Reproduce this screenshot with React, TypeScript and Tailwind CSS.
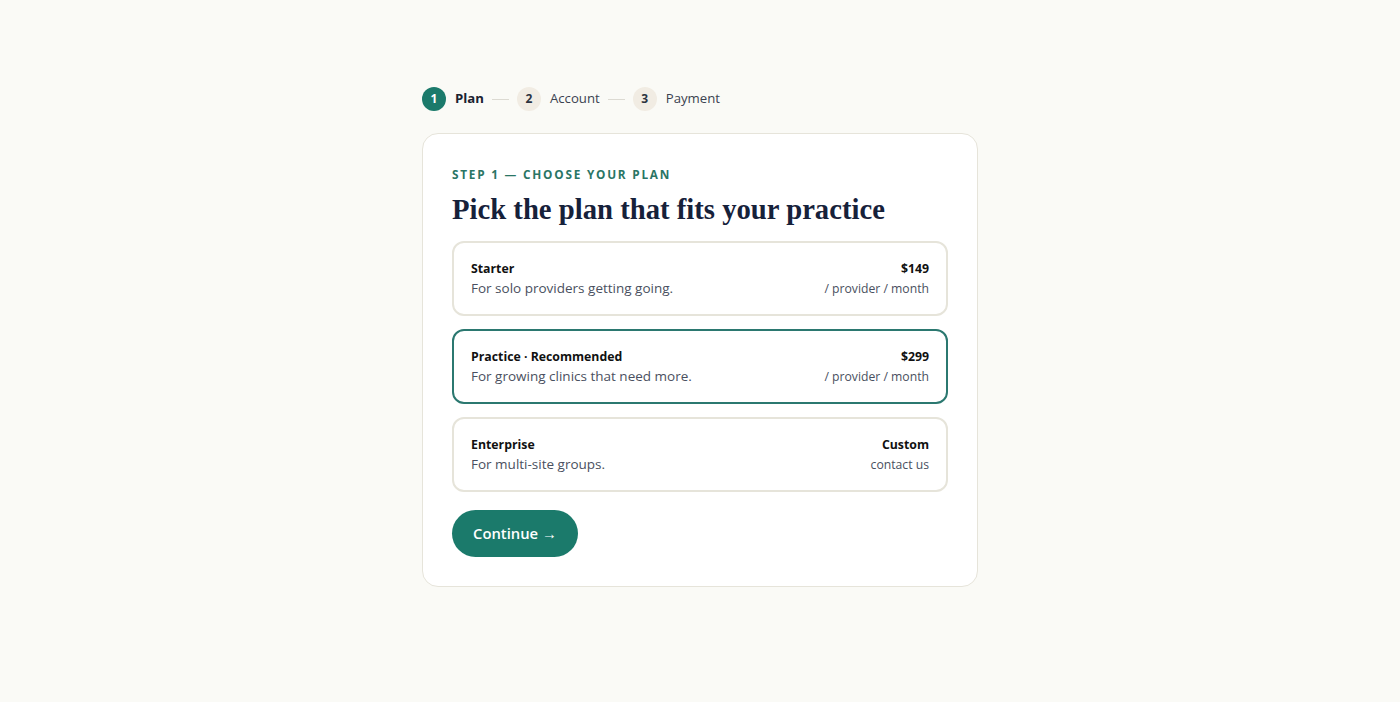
import React from "react";

const sans = { fontFamily: '"Open Sans", "Noto Sans", sans-serif' };

function Step({ n, label, active }: { n: number; label: string; active?: boolean }) {
  return (
    <div className="flex items-center gap-[9px]">
      <div
        className={
          active
            ? "flex h-6 w-6 items-center justify-center rounded-full bg-[#1b7a6b] text-[12px] font-bold text-white"
            : "flex h-6 w-6 items-center justify-center rounded-full bg-[#f1ece3] text-[12px] font-bold text-[#2b3340]"
        }
      >
        {n}
      </div>
      <span className={active ? "text-[13.2px] font-bold text-[#1a2230]" : "text-[13.2px] text-[#3a4250]"}>{label}</span>
    </div>
  );
}

function Plan({
  name,
  desc,
  price,
  sub,
  selected,
}: {
  name: string;
  desc: string;
  price: string;
  sub: string;
  selected?: boolean;
}) {
  return (
    <div
      className={
        selected
          ? "flex items-center justify-between rounded-[12px] border-2 border-[#2b7870] bg-white px-[17px] py-[15.5px]"
          : "flex items-center justify-between rounded-[12px] border-2 border-[#e6e4da] bg-white px-[17px] py-[15.5px]"
      }
    >
      <div className="flex flex-col">
        <span className="text-[12.3px] font-bold leading-[19px] text-[#111]">{name}</span>
        <span className="text-[13.5px] leading-[21px] text-[#4a5060]">{desc}</span>
      </div>
      <div className="flex flex-col items-end">
        <span className="text-[12.3px] font-bold leading-[19px] text-[#111]">{price}</span>
        <span className="text-[12.2px] leading-[21px] text-[#4a5060]">{sub}</span>
      </div>
    </div>
  );
}

export default function App() {
  return (
    <div className="min-h-[702px] w-full bg-[#fafaf6]" style={sans}>
      <div className="mx-auto flex w-[556px] flex-col pt-[87px]">
        <div className="flex items-center gap-2">
          <Step n={1} label="Plan" active />
          <div className="h-px w-[17px] bg-[#dcdad2]" />
          <Step n={2} label="Account" />
          <div className="h-px w-[17px] bg-[#dcdad2]" />
          <Step n={3} label="Payment" />
        </div>
        <div className="mt-[22px] flex flex-col rounded-[16px] border border-[#e6e4da] bg-white px-[29px] pb-[29px] pt-[32px]">
          <div className="text-[11.8px] font-bold uppercase leading-[16px] tracking-[0.15em] text-[#2a7565]">
            Step 1 — Choose your plan
          </div>
          <h1
            className="mt-[9px] text-[28.7px] font-bold leading-[36px] text-[#16213a]"
            style={{ fontFamily: '"Liberation Serif", "DejaVu Serif", serif' }}
          >
            Pick the plan that fits your practice
          </h1>
          <div className="mt-[14px] flex flex-col gap-[13px]">
            <Plan name="Starter" desc="For solo providers getting going." price="$149" sub="/ provider / month" />
            <Plan
              name="Practice · Recommended"
              desc="For growing clinics that need more."
              price="$299"
              sub="/ provider / month"
              selected
            />
            <Plan name="Enterprise" desc="For multi-site groups." price="Custom" sub="contact us" />
          </div>
          <div className="mt-[18px]">
            <button className="h-[47px] rounded-full bg-[#1b7a6b] px-[21px] text-[14.8px] font-semibold text-white">
              Continue →
            </button>
          </div>
        </div>
      </div>
    </div>
  );
}
